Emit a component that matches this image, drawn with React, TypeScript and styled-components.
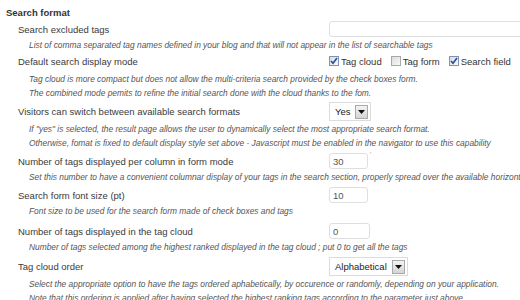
import React from 'react';
import styled, { createGlobalStyle } from 'styled-components';

const GlobalStyle = createGlobalStyle`
  html, body {
    margin: 0;
    padding: 0;
    background: #fff;
  }
  body {
    width: 520px;
    height: 300px;
    overflow: hidden;
    font-family: "Liberation Sans", Arial, sans-serif;
  }
`;

const Page = styled.div`
  width: 520px;
  overflow: hidden;
  padding: 5px 0 0 6px;
  box-sizing: border-box;
`;

const Heading = styled.h3`
  margin: 0;
  font-size: 9.5px;
  font-weight: bold;
  line-height: 15px;
  color: #333;
`;

const Setting = styled.div<{ $gap: number }>`
  margin-top: ${({ $gap }) => $gap}px;
`;

const Row = styled.div`
  display: grid;
  grid-template-columns: 311px auto;
  align-items: center;
  height: 18px;
  padding-left: 12px;
`;

const Label = styled.span`
  font-size: 9.5px;
  color: #3a3a3a;
  white-space: nowrap;
`;

const Desc = styled.div<{ $pad: number }>`
  padding: ${({ $pad }) => $pad}px 0 0 23px;
  font-size: 8.4px;
  font-style: italic;
  line-height: 14px;
  color: #555;
  white-space: nowrap;
`;

const Control = styled.div`
  display: flex;
  align-items: center;
  gap: 2px;
`;

const TextInput = styled.input<{ $width: number }>`
  box-sizing: border-box;
  width: ${({ $width }) => $width}px;
  height: 16px;
  padding: 0 3px;
  border: 1px solid #dfdfdf;
  border-radius: 3px;
  background: #fff;
  font-family: inherit;
  font-size: 9.5px;
  color: #555;
  outline: none;
`;

const Tick = styled.span`
  align-self: flex-start;
  margin-top: -2px;
  font-size: 7px;
  color: #999;
`;

const SelectBox = styled.div<{ $width: number }>`
  box-sizing: border-box;
  display: flex;
  align-items: center;
  justify-content: space-between;
  width: ${({ $width }) => $width}px;
  height: 19px;
  padding: 0 2px 0 5px;
  border: 1px solid #dcdcdc;
  background: #fff;
  font-size: 9.5px;
  color: #222;
`;

const SelectButton = styled.span`
  box-sizing: border-box;
  display: flex;
  align-items: center;
  justify-content: center;
  width: 13px;
  height: 14px;
  border: 1px solid #a9a9a9;
  background: linear-gradient(#f4f4f4, #d4d4d4);
`;

const Checks = styled.div`
  display: flex;
  align-items: center;
  gap: 9px;
  font-size: 9.5px;
  color: #333;
`;

const CheckItem = styled.label`
  display: flex;
  align-items: center;
  gap: 2px;
  white-space: nowrap;
`;

const CheckBox = styled.span<{ $checked: boolean }>`
  box-sizing: border-box;
  display: flex;
  align-items: center;
  justify-content: center;
  width: 10px;
  height: 10px;
  border: 1px solid ${({ $checked }) => ($checked ? '#7f93b4' : '#a8a8a8')};
  background: linear-gradient(135deg, #dcdcdc, #fafafa);
`;

const Arrow = () => (
  <svg width="7" height="4" viewBox="0 0 7 4">
    <path d="M0 0h7L3.5 4z" fill="#111" />
  </svg>
);

const Check = () => (
  <svg width="8" height="8" viewBox="0 0 8 8">
    <path d="M1 4l2 2.3L7 1" fill="none" stroke="#2a4c9a" strokeWidth="1.6" />
  </svg>
);

const Select: React.FC<{ value: string; width: number }> = ({ value, width }) => (
  <SelectBox $width={width}>
    <span>{value}</span>
    <SelectButton>
      <Arrow />
    </SelectButton>
  </SelectBox>
);

interface ISetting {
  label: string;
  desc: string[];
  gap: number;
  pad: number;
  control: React.ReactNode;
}

const settings: ISetting[] = [
  {
    label: 'Search excluded tags',
    desc: ['List of comma separated tag names defined in your blog and that will not appear in the list of searchable tags'],
    gap: 0,
    pad: 0,
    control: <TextInput $width={230} defaultValue="" />,
  },
  {
    label: 'Default search display mode',
    desc: [
      'Tag cloud is more compact but does not allow the multi-criteria search provided by the check boxes form.',
      'The combined mode pemits to refine the initial search done with the cloud thanks to the fom.',
    ],
    gap: 0,
    pad: 2,
    control: (
      <Checks>
        <CheckItem><CheckBox $checked><Check /></CheckBox>Tag cloud</CheckItem>
        <CheckItem><CheckBox $checked={false} />Tag form</CheckItem>
        <CheckItem><CheckBox $checked><Check /></CheckBox>Search field</CheckItem>
      </Checks>
    ),
  },
  {
    label: 'Visitors can switch between available search formats',
    desc: [
      'If "yes" is selected, the result page allows the user to dynamically select the most appropriate search format.',
      'Otherwise, fomat is fixed to default display style set above - Javascript must be enabled in the navigator to use this capability',
    ],
    gap: 2,
    pad: 2,
    control: <Select value="Yes" width={42} />,
  },
  {
    label: 'Number of tags displayed per column in form mode',
    desc: ['Set this number to have a convenient columnar display of your tags in the search section, properly spread over the available horizontal space'],
    gap: 2,
    pad: 0,
    control: (
      <Control>
        <TextInput $width={39} defaultValue="30" />
        <Tick>'</Tick>
      </Control>
    ),
  },
  {
    label: 'Search form font size (pt)',
    desc: ['Font size to be used for the search form made of check boxes and tags'],
    gap: 2,
    pad: 0,
    control: <TextInput $width={39} defaultValue="10" />,
  },
  {
    label: 'Number of tags displayed in the tag cloud',
    desc: ['Number of tags selected among the highest ranked displayed in the tag cloud ; put 0 to get all the tags'],
    gap: 4,
    pad: 0,
    control: <TextInput $width={41} defaultValue="0" />,
  },
  {
    label: 'Tag cloud order',
    desc: [
      'Select the appropriate option to have the tags ordered aphabetically, by occurence or randomly, depending on your application.',
      'Note that this ordering is applied after having selected the highest ranking tags according to the parameter just above.',
    ],
    gap: 3,
    pad: 2,
    control: <Select value="Alphabetical" width={79} />,
  },
];

const App: React.FC = () => (
  <>
    <GlobalStyle />
    <Page>
      <Heading>Search format</Heading>
      {settings.map((s) => (
        <Setting key={s.label} $gap={s.gap}>
          <Row>
            <Label>{s.label}</Label>
            {s.control}
          </Row>
          <Desc $pad={s.pad}>
            {s.desc.map((line) => (
              <div key={line}>{line}</div>
            ))}
          </Desc>
        </Setting>
      ))}
    </Page>
  </>
);

export default App;
